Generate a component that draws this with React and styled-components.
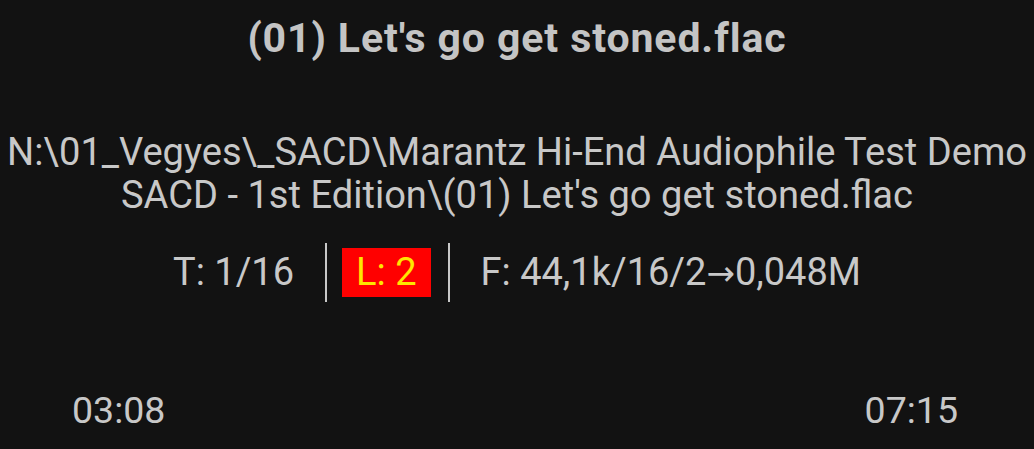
import React from 'react'
import styled, { createGlobalStyle } from 'styled-components'

const GlobalStyle = createGlobalStyle`
	html, body {
		margin: 0;
		padding: 0;
		background: #121212;
	}
	body {
		font-family: Roboto, 'Noto Sans', sans-serif;
		color: #c8c8c8;
	}
`

const Screen = styled.div`
	width: 1034px;
	height: 449px;
	box-sizing: border-box;
	display: flex;
	flex-direction: column;
	align-items: center;
	overflow: hidden;
`

const Title = styled.h1`
	margin: 14px 0 0;
	font-size: 41px;
	line-height: 48px;
	font-weight: 700;
	letter-spacing: 0.9px;
	color: #c4c4c4;
	text-align: center;
`

const Path = styled.p`
	margin: 69px 0 0;
	padding: 0;
	font-size: 38.1px;
	line-height: 43px;
	text-align: center;
`

const InfoRow = styled.div`
	display: flex;
	align-items: center;
	margin-top: 26px;
	font-size: 38px;
`

const InfoItem = styled.span`
	line-height: 49px;
	margin: ${p => (p.left ? '0 31px 0 0' : '0 0 0 31px')};
`

const Divider = styled.span`
	width: 2px;
	height: 59px;
	background: #c8c8c8;
`

const LoopBadge = styled.span`
	margin: 0 17px 0 15px;
	padding: 0 14px;
	background: #ff0000;
	color: #ffe600;
	line-height: 49px;
`

const Arrow = styled.span`
	font-family: 'DejaVu Sans', sans-serif;
	font-size: 34px;
`

const Times = styled.div`
	margin-top: auto;
	align-self: stretch;
	display: flex;
	justify-content: space-between;
	padding: 0 76px 17px 72px;
	font-size: 37.5px;
	line-height: 44px;
`

export default function App() {
	return (
		<>
			<GlobalStyle />
			<Screen>
				<Title>(01) Let's go get stoned.flac</Title>
				<Path>
					N:\01_Vegyes\_SACD\Marantz Hi-End Audiophile Test Demo SACD - 1st
					Edition\(01) Let's go get stoned.flac
				</Path>
				<InfoRow>
					<InfoItem left>T: 1/16</InfoItem>
					<Divider />
					<LoopBadge>L: 2</LoopBadge>
					<Divider />
					<InfoItem>
						F: 44,1k/16/2<Arrow>→</Arrow>0,048M
					</InfoItem>
				</InfoRow>
				<Times>
					<span>03:08</span>
					<span>07:15</span>
				</Times>
			</Screen>
		</>
	)
}
